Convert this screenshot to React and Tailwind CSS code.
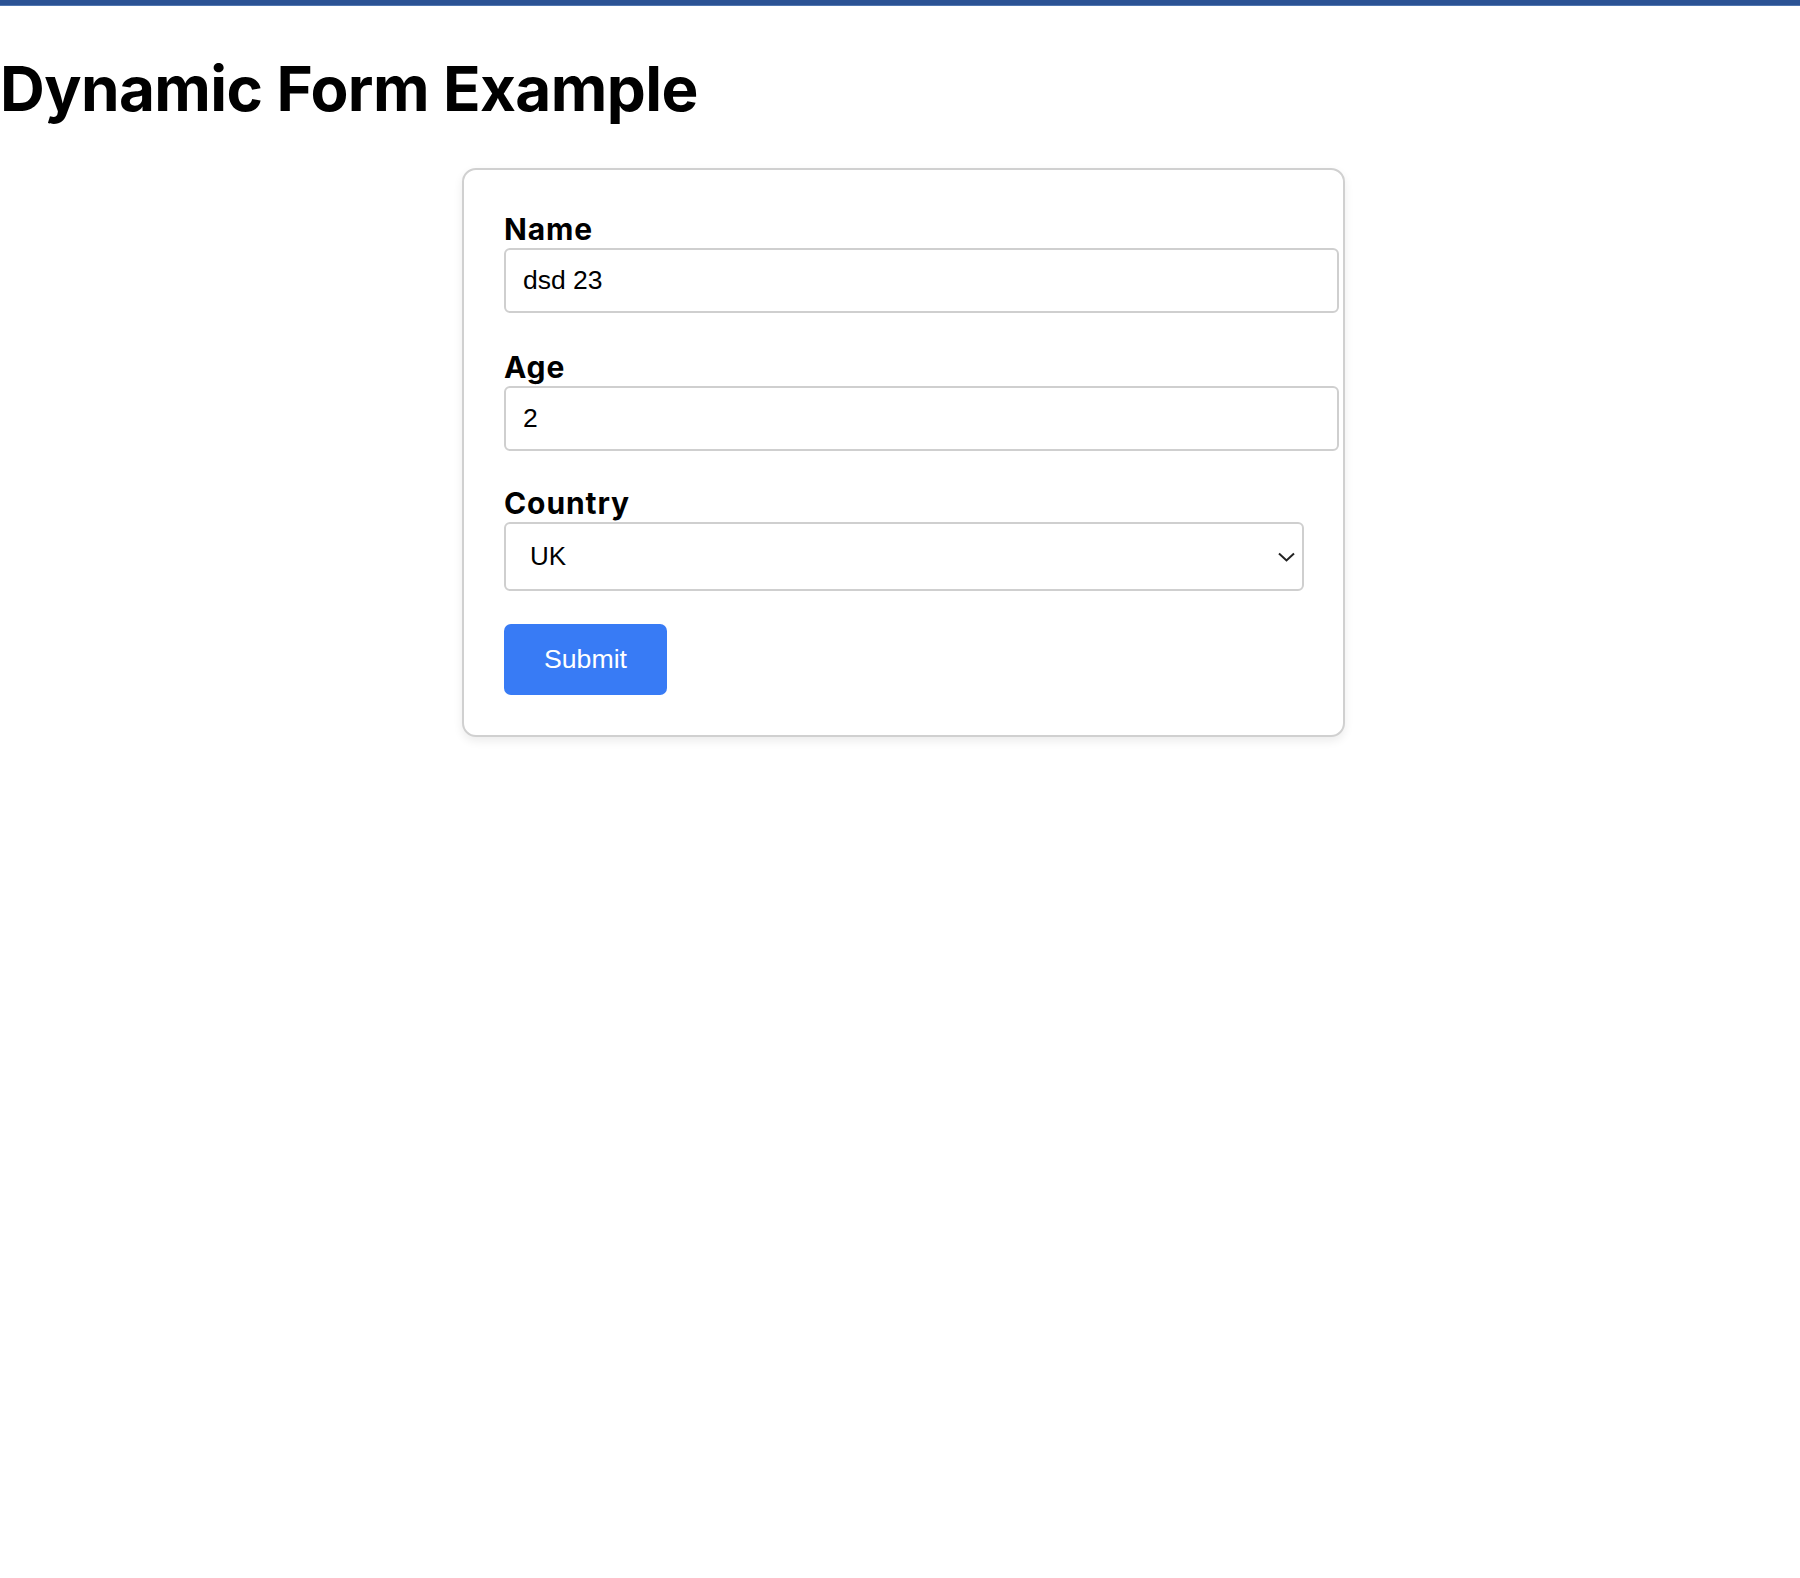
import React, { useState } from 'react';

const fields = [
  { name: 'name', label: 'Name', spacing: 'mb-[35px]' },
  { name: 'age', label: 'Age', spacing: 'mb-[33px]' },
];

const App = () => {
  const [values, setValues] = useState({ name: 'dsd 23', age: '2', country: 'UK' });

  const handleChange = (e) => {
    setValues({ ...values, [e.target.name]: e.target.value });
  };

  return (
    <div className="min-h-screen bg-white text-black font-['Inter','Liberation_Sans',sans-serif]">
      {/* Top bar */}
      <div className="h-[5px] bg-[#2b5294] border-b border-[#5076b0] box-content"></div>

      <h1 className="mt-[44px] text-[62px] leading-[78px] font-bold tracking-[-0.6px]">
        Dynamic Form Example
      </h1>

      {/* Form card */}
      <form
        onSubmit={(e) => e.preventDefault()}
        className="ml-[462px] mt-[40px] w-[883px] rounded-[14px] border-2 border-[#d0d0d0] bg-white px-[40px] pt-[40px] pb-[40px] shadow-[0_4px_10px_rgba(0,0,0,0.08)]"
      >
        {fields.map((field) => (
          <div key={field.name} className={field.spacing}>
            <label className="block text-[30px] leading-[38px] font-bold tracking-[0.9px]">{field.label}</label>
            <input
              name={field.name}
              type="text"
              value={values[field.name]}
              onChange={handleChange}
              className="block box-content w-[797px] h-[29px] px-[17px] py-[16px] rounded-[6px] border-2 border-[#cfcfcf] text-[26.5px] font-['Liberation_Sans',Arial,sans-serif] outline-none"
            />
          </div>
        ))}

        <div className="mb-[33px]">
          <label className="block text-[30px] leading-[38px] font-bold tracking-[0.9px]">Country</label>
          <div className="relative w-[800px]">
            <select
              name="country"
              value={values.country}
              onChange={handleChange}
              className="block w-full h-[69px] appearance-none rounded-[6px] border-2 border-[#cfcfcf] bg-white pl-[24px] text-[26px] font-['Liberation_Sans',Arial,sans-serif] outline-none"
            >
              <option>USA</option>
              <option>UK</option>
              <option>Canada</option>
            </select>
            <svg
              className="pointer-events-none absolute right-[9px] top-[30px] w-[17px] h-[10px]"
              viewBox="0 0 17 10"
              fill="none"
              stroke="#222"
              strokeWidth="2"
            >
              <path d="M1 1.5l7.5 7 7.5-7" />
            </svg>
          </div>
        </div>

        <button
          type="submit"
          className="block w-[163px] h-[71px] rounded-[7px] bg-[#387bf5] text-white text-[26.7px] font-['Liberation_Sans',Arial,sans-serif]"
        >
          Submit
        </button>
      </form>
    </div>
  );
};

export default App;
